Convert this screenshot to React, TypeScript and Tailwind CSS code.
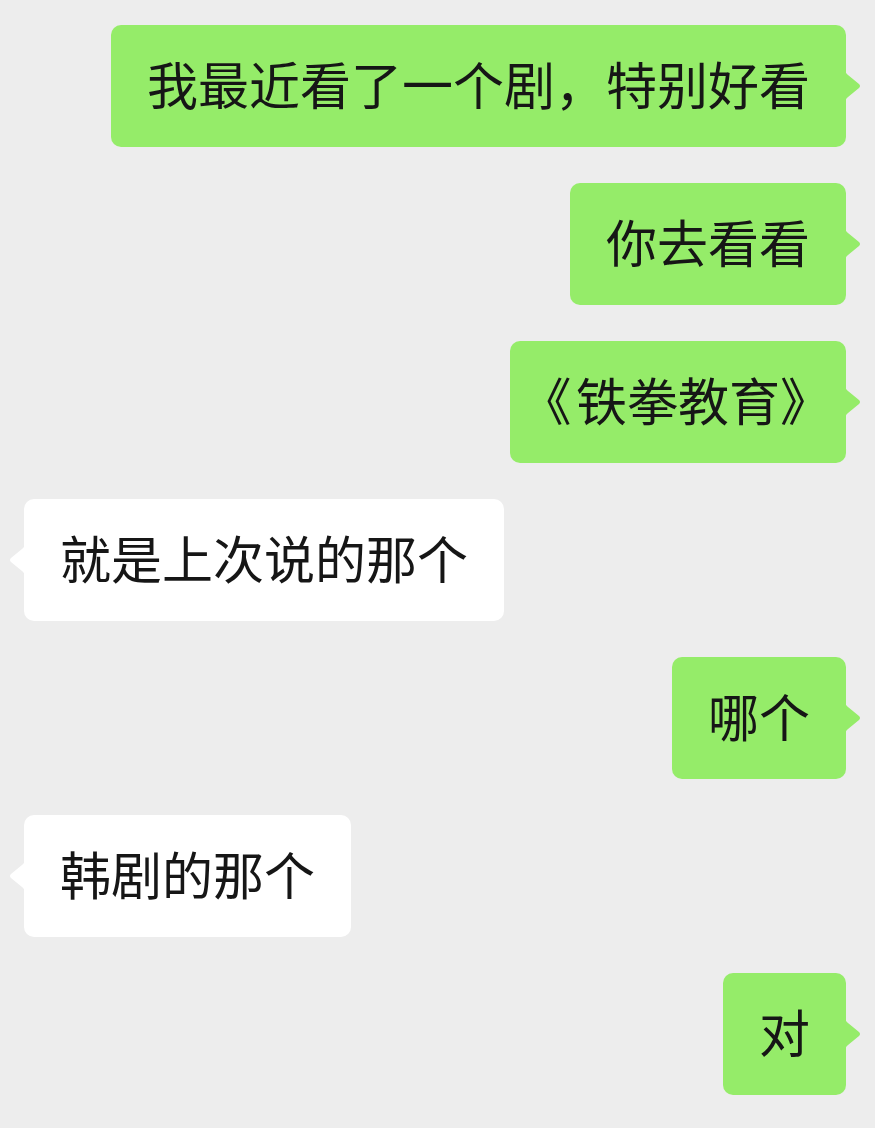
import React, { JSX } from 'react';

type Message = {
  id: number;
  mine: boolean;
  text: React.ReactNode;
};

const messages: Message[] = [
  { id: 1, mine: true, text: '我最近看了一个剧，特别好看' },
  { id: 2, mine: true, text: '你去看看' },
  {
    id: 3,
    mine: true,
    text: (
      <>
        <span className="inline-block w-[30px] [font-feature-settings:'halt']">《</span>
        铁拳教育
        <span className="inline-block w-[30px] [font-feature-settings:'halt']">》</span>
      </>
    ),
  },
  { id: 4, mine: false, text: '就是上次说的那个' },
  { id: 5, mine: true, text: '哪个' },
  { id: 6, mine: false, text: '韩剧的那个' },
  { id: 7, mine: true, text: '对' },
];

const Tail = ({ mine }: { mine: boolean }): JSX.Element => (
  <svg
    width="16"
    height="34"
    viewBox="0 0 16 34"
    className={
      mine
        ? 'absolute top-1/2 -translate-y-1/2 right-[-15px] fill-[#95ec69]'
        : 'absolute top-1/2 -translate-y-1/2 left-[-15px] -scale-x-100 fill-white'
    }
  >
    <path d="M0 0 C0 3 1 4 3 6 L14 15 Q16 17 14 19 L3 28 C1 30 0 31 0 34 Z" />
  </svg>
);

const Bubble = ({ message }: { message: Message }): JSX.Element => (
  <div className={message.mine ? 'flex justify-end' : 'flex justify-start'}>
    <div
      className={`relative flex h-[122px] items-center rounded-[10px] px-[36px] pb-[6px] text-[51px] leading-none text-[#161616] whitespace-nowrap ${
        message.mine ? 'bg-[#95ec69]' : 'bg-white'
      }`}
    >
      <span>{message.text}</span>
      <Tail mine={message.mine} />
    </div>
  </div>
);

const App: React.FC = (): JSX.Element => {
  return (
    <div className="min-h-screen w-[875px] h-[1128px] overflow-hidden bg-[#ededed] font-['Noto_Sans_CJK_SC','Noto_Sans',sans-serif]">
      <div className="flex flex-col gap-[36px] pt-[25px] pl-[24px] pr-[29px]">
        {messages.map((m) => (
          <Bubble key={m.id} message={m} />
        ))}
      </div>
    </div>
  );
};

export default App;
